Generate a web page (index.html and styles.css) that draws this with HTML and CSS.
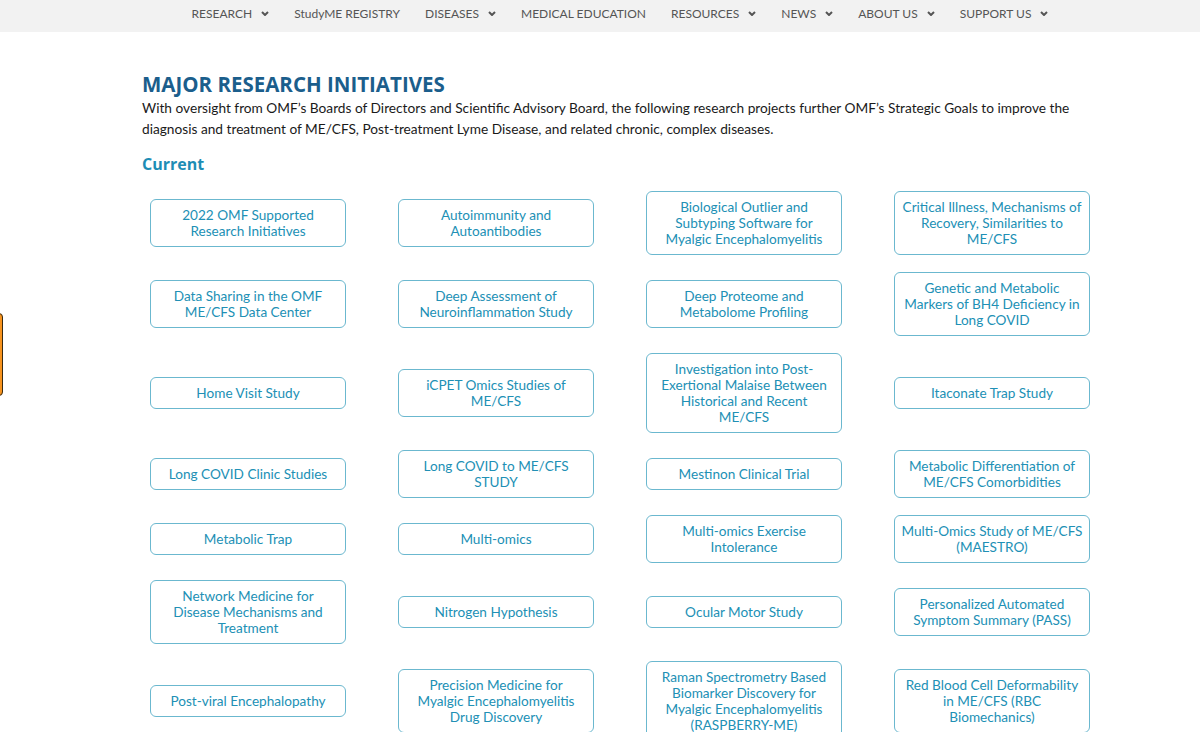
FILE: index.html
```html
<!DOCTYPE html>
<html lang="en">
<head>
    <meta charset="UTF-8">
    <meta name="viewport" content="width=device-width, initial-scale=1.0">
    <title>Major Research Initiatives</title>
    <link rel="stylesheet" href="styles.css">
</head>
<body>
    <nav class="topnav">
        <ul class="menu">
            <li>RESEARCH <svg class="caret" viewBox="0 0 8 5"><path d="M1 1l3 3 3-3"/></svg></li>
            <li>StudyME REGISTRY</li>
            <li>DISEASES <svg class="caret" viewBox="0 0 8 5"><path d="M1 1l3 3 3-3"/></svg></li>
            <li>MEDICAL EDUCATION</li>
            <li>RESOURCES <svg class="caret" viewBox="0 0 8 5"><path d="M1 1l3 3 3-3"/></svg></li>
            <li>NEWS <svg class="caret" viewBox="0 0 8 5"><path d="M1 1l3 3 3-3"/></svg></li>
            <li>ABOUT US <svg class="caret" viewBox="0 0 8 5"><path d="M1 1l3 3 3-3"/></svg></li>
            <li>SUPPORT US <svg class="caret" viewBox="0 0 8 5"><path d="M1 1l3 3 3-3"/></svg></li>
        </ul>
    </nav>

    <div class="feedback-tab"></div>

    <main class="container">
        <h1>MAJOR RESEARCH INITIATIVES</h1>
        <p class="intro">With oversight from OMF’s Boards of Directors and Scientific Advisory Board, the following research projects further OMF’s Strategic Goals to improve the diagnosis and treatment of ME/CFS, Post-treatment Lyme Disease, and related chronic, complex diseases.</p>

        <h2>Current</h2>

        <div class="project-grid">
            <a class="project-btn">2022 OMF Supported Research Initiatives</a>
            <a class="project-btn">Autoimmunity and Autoantibodies</a>
            <a class="project-btn">Biological Outlier and Subtyping Software for Myalgic Encephalomyelitis</a>
            <a class="project-btn">Critical Illness, Mechanisms of Recovery, Similarities to ME/CFS</a>

            <a class="project-btn">Data Sharing in the OMF ME/CFS Data Center</a>
            <a class="project-btn">Deep Assessment of Neuroinflammation Study</a>
            <a class="project-btn">Deep Proteome and Metabolome Profiling</a>
            <a class="project-btn">Genetic and Metabolic Markers of BH4 Deficiency in Long COVID</a>

            <a class="project-btn">Home Visit Study</a>
            <a class="project-btn">iCPET Omics Studies of ME/CFS</a>
            <a class="project-btn">Investigation into Post-Exertional Malaise Between Historical and Recent ME/CFS</a>
            <a class="project-btn">Itaconate Trap Study</a>

            <a class="project-btn">Long COVID Clinic Studies</a>
            <a class="project-btn">Long COVID to ME/CFS STUDY</a>
            <a class="project-btn">Mestinon Clinical Trial</a>
            <a class="project-btn">Metabolic Differentiation of ME/CFS Comorbidities</a>

            <a class="project-btn">Metabolic Trap</a>
            <a class="project-btn">Multi-omics</a>
            <a class="project-btn">Multi-omics Exercise Intolerance</a>
            <a class="project-btn tight">Multi-Omics Study of ME/CFS (MAESTRO)</a>

            <a class="project-btn">Network Medicine for Disease Mechanisms and Treatment</a>
            <a class="project-btn">Nitrogen Hypothesis</a>
            <a class="project-btn">Ocular Motor Study</a>
            <a class="project-btn">Personalized Automated Symptom Summary (PASS)</a>

            <a class="project-btn">Post-viral Encephalopathy</a>
            <a class="project-btn">Precision Medicine for Myalgic Encephalomyelitis Drug Discovery</a>
            <a class="project-btn">Raman Spectrometry Based Biomarker Discovery for Myalgic Encephalomyelitis (RASPBERRY-ME)</a>
            <a class="project-btn">Red Blood Cell Deformability in ME/CFS (RBC Biomechanics)</a>
        </div>
    </main>
</body>
</html>
```

FILE: styles.css
```css
* {
    margin: 0;
    padding: 0;
    box-sizing: border-box;
}

body {
    font-family: 'Lato', 'Liberation Sans', sans-serif;
    color: #222;
    background-color: #fff;
}

.topnav {
    background-color: #f2f2f2;
    height: 32px;
}

.menu {
    list-style: none;
    display: flex;
    justify-content: center;
    align-items: center;
    gap: 25px;
    height: 27px;
    padding-left: 40px;
}

.menu li {
    font-size: 12px;
    color: #555;
    white-space: nowrap;
    display: flex;
    align-items: center;
}

.caret {
    width: 8px;
    height: 5px;
    margin-left: 9px;
    fill: none;
    stroke: #555;
    stroke-width: 2;
}

.feedback-tab {
    position: fixed;
    left: -31px;
    top: 313px;
    width: 34px;
    height: 83px;
    background-color: #f7931e;
    border: 1px solid #3a2a10;
    border-radius: 4px;
}

.container {
    width: 960px;
    margin: 0 0 0 142px;
    padding-top: 39px;
}

h1 {
    font-family: 'Open Sans', sans-serif;
    font-size: 20.5px;
    font-weight: 700;
    color: #1b5e8c;
    line-height: 26px;
}

.intro {
    font-size: 13.7px;
    line-height: 21px;
    color: #1a1a1a;
}

h2 {
    font-family: 'Open Sans', sans-serif;
    font-size: 16px;
    font-weight: 700;
    color: #1d8db5;
    line-height: 22px;
    margin-top: 14px;
}

.project-grid {
    display: grid;
    grid-template-columns: repeat(4, 196px);
    column-gap: 52px;
    row-gap: 17px;
    align-items: center;
    padding-left: 8px;
    margin-top: 16px;
}

.project-btn {
    display: block;
    border: 1px solid #6bb8cf;
    border-radius: 6px;
    padding: 7px 7.2px;
    text-align: center;
    font-size: 13.6px;
    line-height: 16px;
    color: #2190b5;
    text-decoration: none;
}

.project-btn.tight {
    padding-left: 4px;
    padding-right: 4px;
}
```
